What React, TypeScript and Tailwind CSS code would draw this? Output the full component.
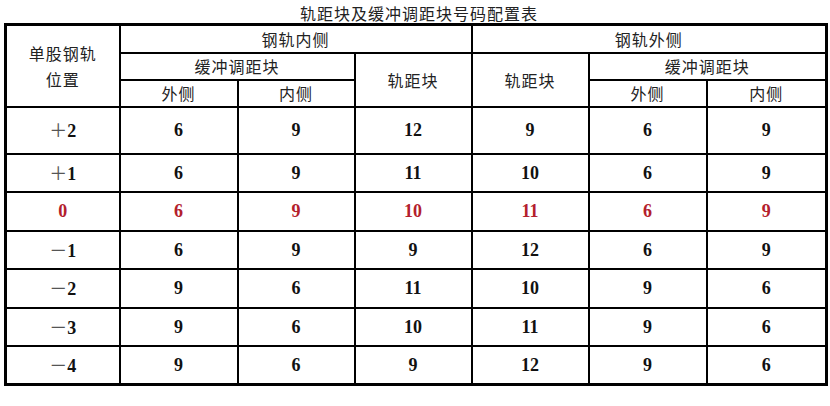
import React from 'react';

const rows = [
  { pos: '2', sign: '＋', cells: ['6', '9', '12', '9', '6', '9'] },
  { pos: '1', sign: '＋', cells: ['6', '9', '11', '10', '6', '9'] },
  { pos: '0', sign: '', cells: ['6', '9', '10', '11', '6', '9'], red: true },
  { pos: '1', sign: '－', cells: ['6', '9', '9', '12', '6', '9'] },
  { pos: '2', sign: '－', cells: ['9', '6', '11', '10', '9', '6'] },
  { pos: '3', sign: '－', cells: ['9', '6', '10', '11', '9', '6'] },
  { pos: '4', sign: '－', cells: ['9', '6', '9', '12', '9', '6'] },
];

const cjk = { fontFamily: '"Noto Sans CJK SC", "Liberation Serif", serif' };
const num = { fontFamily: '"Liberation Serif", "Noto Sans CJK SC", serif' };

const App = () => {
  const th = 'border-2 border-black text-center align-middle font-normal text-[16px] tracking-[1px] text-[#222] p-0 leading-none';
  const td = 'border-2 border-black text-center align-middle p-0 font-bold text-[18px] leading-none';

  return (
    <div className="w-[830px] h-[406px] bg-white overflow-hidden">
      <div className="h-[23px] flex items-center justify-center text-[16px] tracking-[1px] text-[#222] pt-[2px] pl-[8px]" style={cjk}>
        轨距块及缓冲调距块号码配置表
      </div>
      <div className="pl-[4px]">
        <table className="table-fixed border-collapse border-[3px] border-black w-[821px]" style={cjk}>
          <colgroup>
            <col className="w-[114px]" />
            <col className="w-[118px]" />
            <col className="w-[117px]" />
            <col className="w-[117px]" />
            <col className="w-[117px]" />
            <col className="w-[118px]" />
            <col className="w-[120px]" />
          </colgroup>
          <thead>
            <tr className="h-[28px]">
              <th rowSpan={3} className={th}>
                <div className="leading-[26px]">单股钢轨<br />位置</div>
              </th>
              <th colSpan={3} className={th}>钢轨内侧</th>
              <th colSpan={3} className={th}>钢轨外侧</th>
            </tr>
            <tr className="h-[27px]">
              <th colSpan={2} className={th}>缓冲调距块</th>
              <th rowSpan={2} className={th}>轨距块</th>
              <th rowSpan={2} className={th}>轨距块</th>
              <th colSpan={2} className={th}>缓冲调距块</th>
            </tr>
            <tr className="h-[27px]">
              <th className={th}>外侧</th>
              <th className={th}>内侧</th>
              <th className={th}>外侧</th>
              <th className={th}>内侧</th>
            </tr>
          </thead>
          <tbody>
            {rows.map((r, i) => (
              <tr key={i} className={i === 0 ? 'h-[47px]' : 'h-[38.5px]'}>
                <td className={`${td} ${r.red ? 'text-[#b3202c]' : 'text-[#111]'}`} style={num}>
                  {r.sign && (
                    <span className="font-normal text-[18px] text-[#555]" style={cjk}>{r.sign}</span>
                  )}
                  {r.pos}
                </td>
                {r.cells.map((c, j) => (
                  <td key={j} className={`${td} ${r.red ? 'text-[#b3202c]' : 'text-[#111]'}`} style={num}>
                    {c}
                  </td>
                ))}
              </tr>
            ))}
          </tbody>
        </table>
      </div>
    </div>
  );
};

export default App;
